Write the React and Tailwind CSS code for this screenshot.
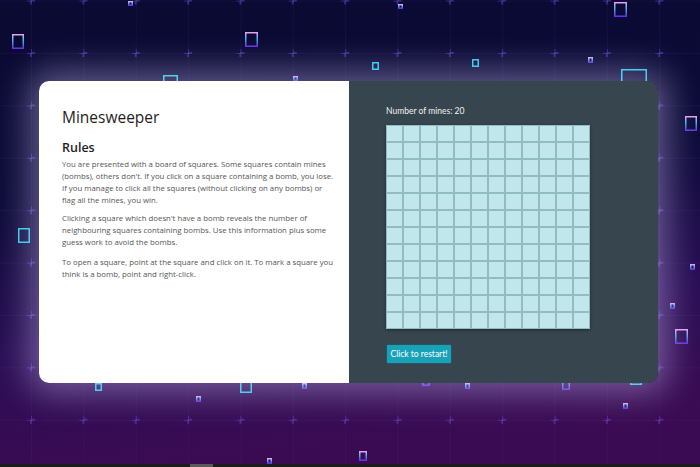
import React from "react";

const squares = [
  [12, 34, 12, 15, "p"], [128, 1, 5, 5, "p"], [245, 32, 13, 15, "p"], [293, 76, 5, 5, "p"],
  [372, 62, 7, 8, "c"], [472, 59, 7, 8, "c"], [398, 4, 5, 5, "p"], [588, 57, 5, 6, "p"],
  [614, 2, 13, 15, "p"], [621, 69, 26, 20, "c"], [685, 116, 12, 15, "p"], [18, 228, 12, 15, "c"],
  [95, 383, 7, 8, "c"], [196, 396, 5, 6, "p"], [240, 375, 12, 18, "c"], [302, 383, 5, 6, "p"],
  [267, 458, 5, 6, "p"], [690, 264, 5, 6, "p"], [670, 303, 5, 6, "p"], [675, 329, 13, 15, "p"],
  [623, 403, 5, 6, "p"], [359, 451, 8, 10, "p"], [422, 376, 8, 10, "p"], [465, 383, 5, 6, "p"],
  [562, 376, 8, 14, "p"], [630, 376, 12, 9, "c"], [163, 75, 15, 10, "c"],
];

function Background() {
  return (
    <svg className="absolute inset-0" width="700" height="467" viewBox="0 0 700 467">
      <defs>
        <linearGradient id="bg" x1="0" y1="0" x2="0.15" y2="1">
          <stop offset="0" stopColor="#0a0a32" />
          <stop offset="0.42" stopColor="#0c0b38" />
          <stop offset="0.75" stopColor="#2a0e55" />
          <stop offset="1" stopColor="#3a0b52" />
        </linearGradient>
        <linearGradient id="sq" x1="0" y1="0" x2="0" y2="1">
          <stop offset="0" stopColor="#e8a0f0" />
          <stop offset="0.45" stopColor="#38b8f0" />
          <stop offset="1" stopColor="#6a30e8" />
        </linearGradient>
        <pattern id="grid" x="-21.3" y="0.6" width="52.35" height="52.4" patternUnits="userSpaceOnUse">
          <line x1="0" y1="0" x2="52.35" y2="0" stroke="#5a48c0" strokeOpacity="0.2" strokeWidth="1" />
          <line x1="0" y1="0" x2="0" y2="52.4" stroke="#5a48c0" strokeOpacity="0.2" strokeWidth="1" />
          <line x1="-4" y1="0" x2="4" y2="0" stroke="#6a4ad0" strokeOpacity="0.55" strokeWidth="1.6" />
          <line x1="0" y1="-4" x2="0" y2="4" stroke="#6a4ad0" strokeOpacity="0.55" strokeWidth="1.6" />
          <line x1="48.35" y1="0" x2="56.35" y2="0" stroke="#6a4ad0" strokeOpacity="0.55" strokeWidth="1.6" />
          <line x1="52.35" y1="-4" x2="52.35" y2="4" stroke="#6a4ad0" strokeOpacity="0.55" strokeWidth="1.6" />
          <line x1="-4" y1="52.4" x2="4" y2="52.4" stroke="#6a4ad0" strokeOpacity="0.55" strokeWidth="1.6" />
          <line x1="0" y1="48.4" x2="0" y2="56.4" stroke="#6a4ad0" strokeOpacity="0.55" strokeWidth="1.6" />
        </pattern>
      </defs>
      <rect width="700" height="467" fill="url(#bg)" />
      <rect width="700" height="467" fill="url(#grid)" />
      {squares.map(([x, y, w, h, t], i) => (
        <rect
          key={i}
          x={x + 0.75}
          y={y + 0.75}
          width={w - 1.5}
          height={h - 1.5}
          fill="none"
          stroke={t === "c" ? "#22d3ee" : "url(#sq)"}
          strokeWidth="1.5"
        />
      ))}
    </svg>
  );
}

const cells = Array.from({ length: 144 }, (_, i) => i);

export default function App() {
  return (
    <div className="relative w-[700px] h-[467px] overflow-hidden flex flex-col">
      <Background />
      <div className="relative flex-1 pt-[81px] pl-[39px]">
        <div className="flex w-[619px] h-[302px] rounded-[10px] overflow-hidden shadow-[0_0_34px_10px_rgba(215,200,255,0.42)]">
          <div className="w-[310px] bg-white pt-[26px] pl-[23px] pr-[16px]" style={{ fontFamily: '"Open Sans", "Noto Sans", sans-serif' }}>
            <h1 className="text-[15.5px] leading-[20px] text-[#1e1e1e] font-medium">Minesweeper</h1>
            <h2 className="mt-[13px] text-[12.5px] leading-[16px] text-[#1e1e1e] font-semibold">Rules</h2>
            <div className="mt-[2px] text-[7.8px] leading-[12px] text-[#555] whitespace-nowrap">
              <p>
                You are presented with a board of squares. Some squares contain mines<br />
                (bombs), others don't. If you click on a square containing a bomb, you lose.<br />
                If you manage to click all the squares (without clicking on any bombs) or<br />
                flag all the mines, you win.
              </p>
              <p className="mt-[6px]">
                Clicking a square which doesn't have a bomb reveals the number of<br />
                neighbouring squares containing bombs. Use this information plus some<br />
                guess work to avoid the bombs.
              </p>
              <p className="mt-[8px]">
                To open a square, point at the square and click on it. To mark a square you<br />
                think is a bomb, point and right-click.
              </p>
            </div>
          </div>
          <div className="w-[309px] bg-[#37464e] pt-[24px] pl-[37px]" style={{ fontFamily: 'Lato, "Open Sans", sans-serif' }}>
            <div className="text-[8.5px] leading-[12px] text-[#f0f0f0]">Number of mines: 20</div>
            <div className="mt-[8px] grid grid-cols-[repeat(12,17px)] w-[204px] shadow-[0_1px_3px_rgba(0,0,0,0.45)]">
              {cells.map((i) => (
                <div key={i} className="w-[17px] h-[17px] bg-[#c1e7ed] border border-[#93bcc2]" />
              ))}
            </div>
            <button className="mt-[15px] w-[66px] h-[20px] rounded-[2px] bg-[#17a2b8] border border-[#2a5560] text-[8.5px] text-white leading-none">
              Click to restart!
            </button>
          </div>
        </div>
      </div>
      <div className="relative h-[3px] bg-[#1c1c1c] flex">
        <div className="ml-[190px] w-[23px] h-full bg-[#5a5a5a]" />
      </div>
    </div>
  );
}
